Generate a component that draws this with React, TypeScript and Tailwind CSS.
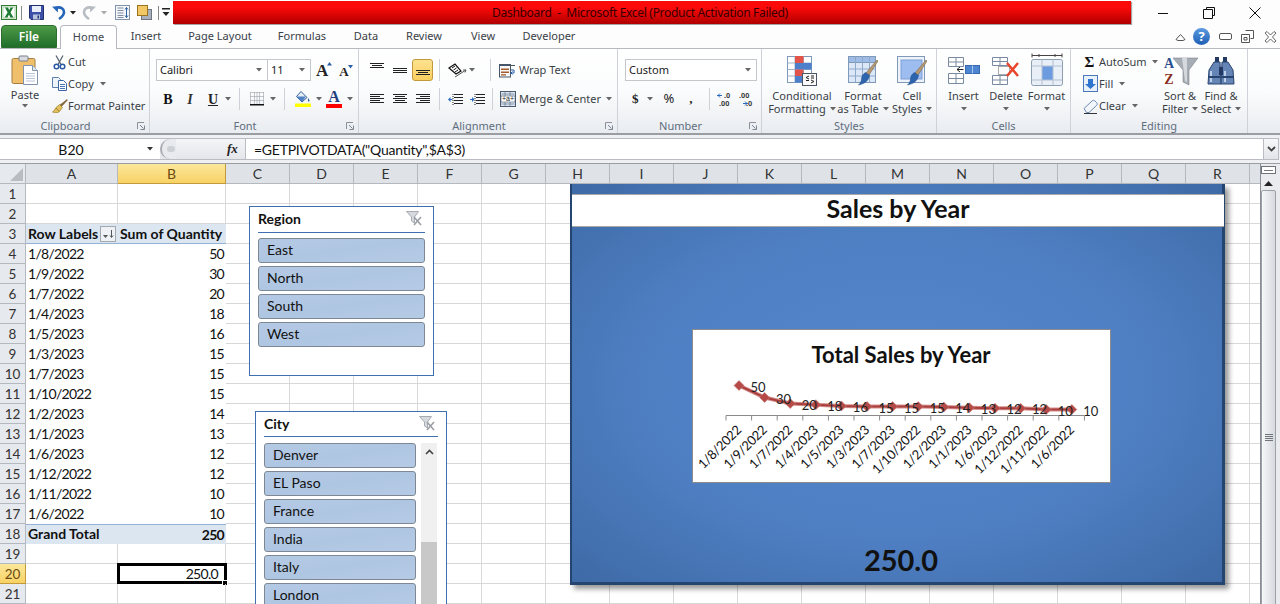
import React from "react";

const Caret = ({ c = "#666" }: { c?: string }) => (
  <svg width="6" height="4" viewBox="0 0 6 4" className="shrink-0"><path d="M0 0h6L3 3.5z" fill={c} /></svg>
);

const Lines = ({ w = 14, rows, }: { w?: number; rows: [number, number][] }) => (
  <svg width={w} height="12" viewBox={`0 0 ${w} 12`} className="shrink-0">
    {rows.map(([x, l], i) => <rect key={i} x={x} y={i * 2 + (12 - rows.length * 2) / 2} width={l} height="1" fill="#222" />)}
  </svg>
);

const ExcelLogo = () => (
  <svg width="16" height="15" viewBox="0 0 16 15" className="shrink-0">
    <rect x=".5" y=".5" width="15" height="14" fill="#eaf5e6" stroke="#2f7d32" />
    <rect x="2" y="2" width="12" height="11" fill="#fff" stroke="#7cb67a" strokeWidth=".6" />
    <path d="M4 2.5h3l1.2 2.6L9.6 2.500h2.600L9.500 7.400l3 5.100H9.400L8 9.600l-1.500 2.900H3.600l3-5.100z" fill="#1e7b34" />
  </svg>
);
const Floppy = () => (
  <svg width="15" height="15" viewBox="0 0 15 15" className="shrink-0">
    <path d="M.5.5h14v14H2L.5 13z" fill="#3c50a8" stroke="#20306e" />
    <rect x="3" y="1" width="9" height="6" fill="#e9eef8" />
    <rect x="4" y="9.500" width="7" height="5" fill="#b8c3dc" />
    <rect x="8.500" y="10.500" width="1.500" height="3" fill="#20306e" />
  </svg>
);
const Undo = ({ c, d }: { c: string; d: string }) => (
  <svg width="14" height="15" viewBox="0 0 14 15" className="shrink-0">
    <path d={d} fill="none" stroke={c} strokeWidth="2.600" />
    <path d="M0 1.500l6 .2-.2 5.800z" fill={c} />
  </svg>
);
const DocIcon = () => (
  <svg width="15" height="15" viewBox="0 0 15 15" className="shrink-0">
    <rect x=".5" y=".5" width="14" height="14" fill="#f4f6f9" stroke="#8193a8" />
    <path d="M2.500 3h6M2.500 5.500h6M2.500 8h6M2.500 10.500h6M2.500 12.500h6" stroke="#7c8da3" />
    <path d="M11.500 2.500v10M10 4.500l1.500-2 1.500 2M10 10.500l1.500 2 1.500-2" stroke="#2d64a8" fill="none" />
  </svg>
);
const Shapes = () => (
  <svg width="15" height="15" viewBox="0 0 15 15" className="shrink-0">
    <rect x="4.500" y="4.500" width="10" height="10" fill="#a9b0bb" stroke="#6e7682" />
    <rect x=".5" y=".5" width="10" height="10" fill="#f2c866" stroke="#9a7420" />
  </svg>
);
const Customize = () => (
  <svg width="8" height="9" viewBox="0 0 8 9" className="shrink-0"><rect y="0" width="8" height="1.500" fill="#222" /><path d="M.5 4h7L4 8z" fill="#222" /></svg>
);

const WinMin = () => <svg width="12" height="12" viewBox="0 0 12 12"><path d="M1 6.500h10" stroke="#111" /></svg>;
const WinRestore = () => <svg width="12" height="12" viewBox="0 0 12 12"><path d="M3.500 2.500V.5h8v8h-2M.5 2.500h9v9h-9z" stroke="#111" fill="none" /></svg>;
const WinClose = () => <svg width="12" height="12" viewBox="0 0 12 12"><path d="M.5.5l11 11M11.500.5l-11 11" stroke="#111" /></svg>;

const Launcher = () => (
  <svg width="8" height="8" viewBox="0 0 8 8" className="shrink-0"><path d="M.5 7V.5H7" stroke="#8a929c" fill="none" /><path d="M3 3l3.500 3.500M7.500 3.500v4h-4" stroke="#7d8590" fill="none" /></svg>
);

const PasteIcon = () => (
  <svg width="28" height="30" viewBox="0 0 28 30">
    <rect x="1" y="3.500" width="23" height="25" rx="1.500" fill="#f0bf6c" stroke="#a67f3f" />
    <rect x="8" y="1" width="9" height="5" rx="1" fill="#d8dbe0" stroke="#7a7f88" />
    <path d="M12.500 10.500h9l5 5v14h-14z" fill="#fff" stroke="#7f93ad" />
    <path d="M21.500 10.500v5h5" fill="#dfe7f2" stroke="#7f93ad" />
    <path d="M15 18.500h9M15 21h9M15 23.500h9M15 26h9" stroke="#b9c5d6" />
  </svg>
);
const CutIcon = () => (
  <svg width="13" height="15" viewBox="0 0 13 15">
    <path d="M3 .5l5 9M10 .5l-5 9" stroke="#5a6472" strokeWidth="1.300" />
    <circle cx="3.500" cy="11.500" r="2.300" fill="none" stroke="#2b58a3" strokeWidth="1.500" />
    <circle cx="9.500" cy="11.500" r="2.300" fill="none" stroke="#2b58a3" strokeWidth="1.500" />
  </svg>
);
const CopyIcon = () => (
  <svg width="15" height="14" viewBox="0 0 15 14">
    <path d="M.5.5h6l2 2v8h-8z" fill="#eef3fa" stroke="#5d7fae" />
    <path d="M6.500 3.500h5l3 3v7h-8z" fill="#fff" stroke="#3c66a3" />
    <path d="M8 7.500h5M8 9.500h5M8 11.500h5" stroke="#4a78b8" />
  </svg>
);
const PainterIcon = () => (
  <svg width="16" height="14" viewBox="0 0 16 14">
    <path d="M15 .5l.5.5-6 6.500-1.500-1.500z" fill="#8a6a3a" stroke="#5d4622" strokeWidth=".5" />
    <path d="M7.500 5.500l3 3-3.500 4.500c-2 1-4.500.5-6.500 0 2-1 2.500-3 3-4z" fill="#e5c15c" stroke="#9a7b27" strokeWidth=".7" />
    <path d="M4 9l3 3" stroke="#9c8136" />
  </svg>
);

const GrowA = ({ up, size }: { up: boolean; size: number }) => (
  <span className="flex items-start shrink-0">
    <span className="font-['Liberation_Serif',serif] font-bold leading-none text-[#222]" style={{ fontSize: size }}>A</span>
    <svg width="5" height="4" viewBox="0 0 5 4" className="-ml-[1px]"><path d={up ? "M0 3.500h5L2.500 0z" : "M0 0h5L2.500 3.500z"} fill="#2b5ea5" /></svg>
  </span>
);

const BordersIcon = () => (
  <svg width="14" height="14" viewBox="0 0 14 14">
    <path d="M.5.500h13M.5 4.500h13M.5 8.500h13M.5.500v12M4.500.5v12M9.500.5v12M13.500.5v12M7 .5v12" stroke="#8c929b" strokeDasharray="1 1" fill="none" />
    <rect x="0" y="12" width="14" height="1.500" fill="#111" />
  </svg>
);
const FillIcon = () => (
  <svg width="16" height="16" viewBox="0 0 16 16">
    <path d="M6 .5l6 6-5 4.500-5.500-5.500z" fill="#e8eef6" stroke="#345d95" />
    <path d="M1.500 5.500h9.500L7 11z" fill="#4f81c4" />
    <path d="M13 7c1.500 2 2 3 1.200 3.600-.9.500-1.700-.5-1.200-3.600z" fill="#345d95" />
    <rect x="0" y="12.500" width="16" height="3.500" fill="#ffff00" />
  </svg>
);
const ColorIcon = () => (
  <span className="relative flex flex-col items-center w-[16px] shrink-0">
    <span className="font-['Liberation_Serif',serif] font-bold text-[16px] leading-[13px] text-[#1f3f80]">A</span>
    <span className="w-[16px] h-[4px] mt-[1px] bg-[#ff0000]" />
  </span>
);

const OrientIcon = () => (
  <svg width="19" height="15" viewBox="0 0 19 15">
    <path d="M1 5l6-4 6 7-5 3z" fill="#fff" stroke="#111" strokeWidth="1.200" />
    <path d="M4 5l3-2M5.500 7l3-2M7 9l3-2" stroke="#111" />
    <path d="M7 14l11-7M18 7l-3 0M18 7l-1 2.500" stroke="#555" fill="none" />
  </svg>
);
const IndentIcon = ({ flip }: { flip?: boolean }) => (
  <svg width="15" height="13" viewBox="0 0 15 13">
    <path d="M6 1.500h9M6 4.500h9M6 7.500h9M6 10.500h9" stroke="#222" />
    <path d="M5 1v12" stroke="#222" strokeDasharray="1 1" />
    {flip ? <path d="M0 6h2V4l2.500 2.500L2 9V7H0z" fill="#2a6ac0" /> : <path d="M4.500 6h-2V4L0 6.500 2.500 9V7h2z" fill="#2a6ac0" />}
  </svg>
);
const WrapIcon = () => (
  <svg width="16" height="16" viewBox="0 0 16 16">
    <rect x=".5" y="2.500" width="11" height="12.500" fill="#f8f8f8" stroke="#46566a" />
    <path d="M0 .5h16" stroke="#46566a" strokeWidth="1" transform="translate(0 3)" />
    <rect x="2" y="6.500" width="8" height="1.500" fill="#a35c2f" />
    <rect x="2" y="9.500" width="8" height="1.500" fill="#a35c2f" />
    <rect x="2" y="12.200" width="5" height="1.300" fill="#a35c2f" />
    <path d="M12 8h3v3h-2M13.500 9.500l-1.500 1.500 1.500 1.500" stroke="#2a5ea8" fill="none" />
  </svg>
);
const MergeIcon = () => (
  <svg width="16" height="16" viewBox="0 0 16 16">
    <rect x=".5" y=".5" width="15" height="15" fill="#dfe7f1" stroke="#4c5c70" />
    <rect x="1" y="5" width="14" height="6" fill="#fff" stroke="#4c5c70" strokeWidth=".6" />
    <path d="M1.500 3h13M1.500 13h13M5 1v4M10 1v4M5 11v4M10 11v4" stroke="#6f8199" strokeWidth=".8" />
    <text x="8" y="10" fontSize="7" textAnchor="middle" fontFamily="'Liberation Sans',sans-serif" fill="#222">+a+</text>
  </svg>
);
const DecIcon = ({ more }: { more?: boolean }) => (
  <svg width="17" height="15" viewBox="0 0 17 15">
    <path d={more ? "M0 3.500h5M3 1.500l-2 2 2 2" : "M11 11.500H6M8 9.500l2 2-2 2"} stroke="#2a6ac0" fill="none" />
    <text x={more ? 7 : 2} y="6" fontSize="7.500" fontWeight="700" fontFamily="'Liberation Sans',sans-serif" fill="#333">{more ? ".0" : ".00"}</text>
    <text x={more ? 2 : 9} y="14" fontSize="7.500" fontWeight="700" fontFamily="'Liberation Sans',sans-serif" fill="#333">{more ? ".00" : ".0"}</text>
  </svg>
);

const GridBase = ({ children, w = 30, h = 30 }: { children?: React.ReactNode; w?: number; h?: number }) => (
  <svg width={w} height={h} viewBox={`0 0 ${w} ${h}`}>{children}</svg>
);
const CondIcon = () => (
  <GridBase>
    <rect x=".5" y=".5" width="24" height="26" fill="#fff" stroke="#7f9ab8" />
    <path d="M.5 7h24M.5 13.500h24M.5 20h24M8 .5v26M16.500.5v26" stroke="#9db3cc" />
    <rect x="8" y="0" width="8.500" height="7" fill="#e2534a" />
    <rect x="8" y="7" width="16.500" height="6.500" fill="#4d7fcb" />
    <rect x="8" y="13.500" width="8.500" height="6.500" fill="#e2534a" />
    <rect x="8" y="20" width="8.500" height="6.500" fill="#4d7fcb" />
    <rect x="15.500" y="17.500" width="14" height="12" fill="#fbfbfb" stroke="#4b5563" />
    <path d="M22 20l-3 1.500 3 1.500M19 24.500h3M24 20h3M24 22h3M24 24l3 1.500-3 1.500" stroke="#222" fill="none" />
  </GridBase>
);
const Brush = () => (
  <>
    <path d="M29 4l1 1-9 14-3-2z" fill="#b79a72" stroke="#7b674a" strokeWidth=".6" />
    <path d="M17.500 16.500l4 3c-1 5-4 8-11 9.500 2-2 3-4 3-6 0-3 2-5.500 4-6.500z" fill="#2e63ad" stroke="#1f4a87" strokeWidth=".5" />
  </>
);
const TableIcon = () => (
  <GridBase>
    <rect x=".5" y=".5" width="27" height="26" fill="#dce8f7" stroke="#7f9ab8" />
    <rect x=".5" y=".5" width="27" height="6" fill="#9dbbe4" stroke="#7f9ab8" />
    <path d="M.5 13h27M.5 20h27M7.500.5v26M14.500.5v26M21.500.5v26" stroke="#8fa9c9" />
    <Brush />
  </GridBase>
);
const StylesIcon = () => (
  <GridBase>
    <rect x=".5" y=".5" width="27" height="26" fill="#eef3fa" stroke="#7f9ab8" />
    <rect x="4" y="4" width="21" height="19" fill="#9dbcf0" stroke="#7ea0d6" />
    <Brush />
  </GridBase>
);
const InsertIcon = () => (
  <svg width="32" height="30" viewBox="0 0 32 30">
    <path d="M.5 1.500h15v9h-15zM.5 6h15M8 1.500v9M.5 17.500h15v10h-15zM.5 22.500h15M8 17.500v10" stroke="#7a8aa0" fill="#fff" />
    <rect x="17.500" y="9.500" width="14" height="8" fill="#4d85d1" stroke="#376ab3" />
    <path d="M24.500 9.500v8" stroke="#a9c6ee" />
    <path d="M15.500 13.500H9M12 11l-3 2.500 3 2.500" stroke="#222" fill="none" />
  </svg>
);
const DeleteIcon = () => (
  <svg width="28" height="30" viewBox="0 0 28 30">
    <path d="M.5 1.500h15v8h-15zM.5 5.500h15M8 1.500v8M.5 19.500h15v9h-15zM.5 24h15M8 19.500v9" stroke="#7a8aa0" fill="#fff" />
    <rect x="6.500" y="10.500" width="11" height="8" fill="#fff" stroke="#555" strokeDasharray="1 1" />
    <path d="M15 7l11 13M26 7L15 20" stroke="#e8452c" strokeWidth="2.500" />
  </svg>
);
const FormatIcon = () => (
  <svg width="32" height="34" viewBox="0 0 32 34" className="-mt-[3px]">
    <path d="M1 2.500h30M1 .5v4M31 .5v4M8 1v3M24 1v3" stroke="#444" fill="none" />
    <rect x=".5" y="6.500" width="31" height="26" rx="2" fill="#e9eff7" stroke="#8c9db3" />
    <rect x="11" y="13" width="11" height="14" fill="#6c9be0" />
    <path d="M.5 13h31M.5 27h31M11 6.500v26M22 6.500v26" stroke="#b1c0d2" />
  </svg>
);
const FillDown = () => (
  <svg width="15" height="18" viewBox="0 0 15 18">
    <rect x=".5" y=".5" width="14" height="16" fill="#e8f0fb" stroke="#4a78b8" />
    <path d="M5 4h5v5h3l-5.500 5L2 9h3z" fill="#2f74cf" />
  </svg>
);
const Eraser = () => (
  <svg width="15" height="15" viewBox="0 0 15 15">
    <path d="M1 9.500L9 2c1-1 2-1 3 0l1.500 1.500c1 1 1 2 0 3L6 13.500H3.500z" fill="#f2f5fa" stroke="#6b8ab5" />
    <path d="M1 14.500h13" stroke="#333" />
  </svg>
);
const SortIcon = () => (
  <svg width="36" height="32" viewBox="0 0 36 32">
    <path d="M11 3h25l-9 12v15l-6-3V15z" fill="#a7adb5" stroke="#7f858d" strokeWidth=".6" />
    <path d="M20 3h5v24l-2-1z" fill="#d5d8dc" />
    <text x="7" y="13" fontSize="14" fontWeight="700" fontFamily="'Liberation Serif',serif" textAnchor="middle" fill="#2b4f8f">A</text>
    <text x="7" y="29" fontSize="14" fontWeight="700" fontFamily="'Liberation Serif',serif" textAnchor="middle" fill="#8a2f20">Z</text>
  </svg>
);
const FindIcon = () => (
  <svg width="30" height="30" viewBox="0 0 30 30">
    <rect x="9" y="1" width="4" height="6" fill="#223a63" />
    <rect x="17" y="1" width="4" height="6" fill="#223a63" />
    <path d="M8 6h6l1 22H2l1-14z" fill="#6485b5" stroke="#2a4470" />
    <path d="M16 6h6l5 8 1 14H15z" fill="#6485b5" stroke="#2a4470" />
    <rect x="13" y="11" width="4" height="8" fill="#223a63" />
    <path d="M5 15v11M19 15v11" stroke="#bcd0ea" strokeWidth="2" />
    <rect x="2.500" y="20" width="12" height="2" fill="#2a4470" />
    <rect x="15.500" y="20" width="12" height="2" fill="#2a4470" />
  </svg>
);

const Group = ({ w, label, launcher, children }: { w: string; label: string; launcher?: boolean; children: React.ReactNode }) => (
  <div className={`${w} h-full flex flex-col shrink-0 border-r border-[#cfd3d9]`}>
    <div className="h-[69px] flex">{children}</div>
    <div className="flex-1 flex items-start relative">
      <div className={`flex-1 text-center text-[#5f6d7e] leading-[14px] pt-[1px] ${launcher ? "pr-[18px]" : ""}`}>{label}</div>
      {launcher && <span className="absolute right-[4px] top-[4px]"><Launcher /></span>}
    </div>
  </div>
);

const Big = ({ w, icon, l1, l2, caret }: { w: string; icon: React.ReactNode; l1: string; l2?: string; caret?: boolean }) => (
  <div className={`${w} flex flex-col items-center shrink-0 pt-[7px]`}>
    <div className="h-[30px] flex items-center justify-center">{icon}</div>
    <div className="mt-[3px] leading-[13px] whitespace-nowrap">{l1}</div>
    {l2 && (
      <div className="leading-[13px] whitespace-nowrap flex items-center gap-[4px]">
        {l2}{caret && <Caret />}
      </div>
    )}
    {!l2 && caret && <div className="h-[13px] flex items-center"><Caret /></div>}
  </div>
);

const SmallRow = ({ icon, text, caret, iw = "w-[20px]" }: { icon: React.ReactNode; text: string; caret?: boolean; iw?: string }) => (
  <div className="h-[22px] flex items-center whitespace-nowrap">
    <span className={`${iw} flex justify-center shrink-0`}>{icon}</span>
    <span className="ml-[-1px]">{text}</span>
    {caret && <span className="ml-[6px]"><Caret /></span>}
  </div>
);

const Sep = ({ h = "h-[22px]", m = "" }: { h?: string; m?: string }) => <span className={`${h} ${m} w-px bg-[#cdd2d8] shrink-0`} />;

const ColNames = "ABCDEFGHIJKLMNOPQR".split("");
const colW = (i: number) => (i === 0 ? "w-[92px]" : i === 1 ? "w-[108px]" : "w-[64px]");

const Pivot: [string, string][] = [
  ["1/8/2022", "50"], ["1/9/2022", "30"], ["1/7/2022", "20"], ["1/4/2023", "18"], ["1/5/2023", "16"],
  ["1/3/2023", "15"], ["1/7/2023", "15"], ["1/10/2022", "15"], ["1/2/2023", "14"], ["1/1/2023", "13"],
  ["1/6/2023", "12"], ["1/12/2022", "12"], ["1/11/2022", "10"], ["1/6/2022", "10"],
];

const rowCell = "h-[20px] shrink-0 px-[2px] leading-[20px] whitespace-nowrap text-[#111]";
const num = "tracking-[-0.7px]";

const Row = ({ n }: { n: number }) => {
  const inPivot = n >= 3 && n <= 18;
  const sel = n === 20;
  const band = n === 3 || n === 18;
  const p = n >= 4 && n <= 17 ? Pivot[n - 4] : null;
  return (
    <div className="flex h-[20px]">
      <div className={`w-[26px] h-[20px] shrink-0 text-center leading-[20px] text-[13.5px] border-r border-b ${sel ? "bg-gradient-to-b from-[#fbe79a] to-[#f8d264] border-[#c29a3b] text-[#6b4a10]" : "bg-[#e6e9ed] border-[#b4b9bf] text-[#333]"}`}>{n}</div>
      <div className={`w-[92px] ${rowCell} ${band ? "bg-[#dce6f1]" : ""} ${inPivot ? "" : "border-r border-b border-[#d8d8d8]"} ${n === 3 ? "border-b border-[#95b3d7]" : ""} ${n === 18 ? "font-bold border-t border-[#95b3d7]" : ""} flex items-center justify-between pr-0`}>
        {n === 3 && <><b>Row Labels</b>
          <span className="w-[16px] h-[16px] border border-[#a3a8ae] bg-[#eef1f5] flex items-center justify-center mr-[2px]">
            <svg width="12" height="10" viewBox="0 0 12 10"><path d="M1 6h5L3.500 9z" fill="#555" /><path d="M9.500 1v7M8 6.500l1.500 2 1.500-2" stroke="#555" fill="none" /></svg>
          </span></>}
        {p && <span className={num}>{p[0]}</span>}
        {n === 18 && <span className="-mt-[2px]">Grand Total</span>}
      </div>
      <div className={`w-[108px] ${rowCell} relative text-right ${band ? "bg-[#dce6f1]" : ""} ${inPivot ? "" : "border-r border-b border-[#d8d8d8]"} ${n === 3 ? "border-b border-[#95b3d7]" : ""} ${n === 18 ? "font-bold border-t border-[#95b3d7] leading-[17px]" : ""}`}>
        {n === 3 && <b className="block text-left">Sum of Quantity</b>}
        {p && <span className={num}>{p[1]}</span>}
        {n === 18 && <span className={num}>250</span>}
        {sel && <>
          <span className={`pr-[5px] ${num}`}>250.0</span>
          <span className="absolute -left-[1px] -top-[1px] -right-[2px] -bottom-[1px] border-[3px] border-black" />
          <span className="absolute -right-[3px] -bottom-[3px] w-[4px] h-[4px] bg-black border border-white box-content" />
        </>}
      </div>
      {ColNames.slice(2).map((c) => <div key={c} className="w-[64px] h-[20px] shrink-0 border-r border-b border-[#d8d8d8]" />)}
      <div className="w-[10px] h-[20px] shrink-0 border-b border-[#d8d8d8]" />
    </div>
  );
};

const ClearFilter = () => (
  <svg width="16" height="15" viewBox="0 0 16 15">
    <path d="M.5.5h12L8.500 6v6l-3-2V6z" fill="#d6d9dd" stroke="#a8acb2" />
    <path d="M8 6l7 8M15 6l-7 8" stroke="#9a9ea5" strokeWidth="1.600" />
  </svg>
);

const SlicerBtn = ({ t, w }: { t: string; w: string }) => (
  <div className={`${w} h-[25px] shrink-0 rounded-[3px] border border-[#7d8894] bg-gradient-to-br from-[#b4c9e4] via-[#afc6e2] to-[#b5cae5] pl-[8px] leading-[22px] text-[#111] text-[14px]`}>{t}</div>
);

const data: [string, number][] = Pivot.map(([d, v]) => [d, Number(v)]);
const X0 = 33;
const step = 25.6;
const px = (i: number) => X0 + 13 + step * i;
const py = (v: number) => 85.5 - 0.6 * v;
const Chart = () => {
  const pts = data.map(([, v], i) => `${px(i)},${py(v)}`).join(" ");
  return (
    <svg width="418" height="153" viewBox="0 0 418 153" className="block">
      <text x="208" y="33" textAnchor="middle" fontSize="22" fontWeight="700" fontFamily="Lato,sans-serif" fill="#111">Total Sales by Year</text>
      <path d={`M${X0} 85.500H${X0 + 358}`} stroke="#8a8a8a" />
      {Array.from({ length: 15 }, (_, i) => <path key={i} d={`M${X0 + step * i} 85.500v5`} stroke="#8a8a8a" />)}
      <polyline points={pts} fill="none" stroke="#d58f8d" strokeWidth="4" />
      <polyline points={pts} fill="none" stroke="#a93f3c" strokeWidth="2" />
      {data.map(([, v], i) => (
        <path key={i} d={`M${px(i)} ${py(v) - 5}l5 5-5 5-5-5z`} fill="#b54a47" stroke="#c9817f" strokeWidth=".6" />
      ))}
      {data.map(([, v], i) => (
        <text key={i} x={px(i) + 19} y={py(v) + 6} textAnchor="middle" fontSize="13" fontFamily="Lato,sans-serif" fill="#222">{v}</text>
      ))}
      {data.map(([d], i) => (
        <text key={i} x={0} y={0} transform={`translate(${px(i) + 3} ${101}) rotate(-45)`} textAnchor="end" fontSize="13" letterSpacing="-0.3" fontFamily="Lato,sans-serif" fill="#111">{d}</text>
      ))}
    </svg>
  );
};

export default function App() {
  return (
    <div className="relative w-[1280px] h-[604px] overflow-hidden bg-white font-['Noto_Sans',sans-serif] text-[11px] text-[#3a3f46]">
      {/* title bar */}
      <div className="h-[25px] flex items-start bg-[#fdfdfe]">
        <div className="w-[173px] h-[25px] shrink-0 flex items-center pl-[1px]">
          <ExcelLogo />
          <span className="ml-[4px] w-px h-[14px] bg-[#888]" />
          <span className="ml-[7px]"><Floppy /></span>
          <span className="ml-[8px]"><Undo c="#2463b8" d="M3 3c6-2 9 1 9 4s-2 5-5 7" /></span>
          <span className="ml-[4px]"><Caret c="#222" /></span>
          <span className="ml-[6px] -scale-x-100"><Undo c="#b7bcc3" d="M3 3c6-2 9 1 9 4s-2 5-5 7" /></span>
          <span className="ml-[5px]"><Caret c="#aaa" /></span>
          <span className="ml-[8px]"><DocIcon /></span>
          <span className="ml-[7px]"><Shapes /></span>
          <span className="ml-[6px] w-px h-[14px] bg-[#888]" />
          <span className="ml-[3px]"><Customize /></span>
        </div>
        <div className="w-[958px] h-[23px] mt-[1px] shrink-0 bg-gradient-to-b from-[#fb0a0a] from-30% to-[#b00000] shadow-[1px_1px_1px_rgba(0,0,0,0.35)] flex items-center justify-center pr-[24px] text-[12px] text-[#350000] tracking-[-0.3px] whitespace-pre">
          Dashboard  -  Microsoft Excel (Product Activation Failed)
        </div>
        <div className="flex-1 h-[25px] flex items-center pl-[26px] gap-[34px]">
          <WinMin /><WinRestore /><WinClose />
        </div>
      </div>

      {/* tabs */}
      <div className="h-[24px] flex items-end border-b border-[#b5b9be] bg-[#fdfdfe] relative">
        <div className="w-[56px] ml-[1px] h-[23px] rounded-t-[4px] bg-gradient-to-b from-[#4d9a47] to-[#1f6e2a] border border-[#2b6d2e] text-white text-[12px] font-semibold flex items-center justify-center">File</div>
        <div className="w-[57px] ml-[3px] h-[24px] -mb-px rounded-t-[4px] bg-white border border-b-0 border-[#b5b9be] flex items-center justify-center text-[#3d4650]">Home</div>
        {([["w-[58px]", "Insert"], ["w-[90px]", "Page Layout"], ["w-[74px]", "Formulas"], ["w-[54px]", "Data"], ["w-[62px]", "Review"], ["w-[56px]", "View"], ["w-[76px]", "Developer"]] as [string, string][]).map(([w, t]) => (
          <div key={t} className={`${w} h-[23px] flex items-center justify-center`}>{t}</div>
        ))}
        <div className="ml-auto h-[23px] flex items-center pr-[3px] gap-[7px]">
          <svg width="11" height="8" viewBox="0 0 11 8"><path d="M1 6.500L5.500 1.500 10 6.500 8 7.500H3z" fill="#fff" stroke="#555" /></svg>
          <span className="w-[17px] h-[17px] rounded-full bg-gradient-to-b from-[#5b9be0] to-[#1d5fb4] text-white font-bold text-[13px] flex items-center justify-center leading-none">?</span>
          <svg width="13" height="7" viewBox="0 0 13 7" className="ml-[2px]"><rect x=".5" y=".5" width="12" height="6" rx="1.500" fill="#fff" stroke="#555" /></svg>
          <svg width="13" height="13" viewBox="0 0 13 13" className="ml-[2px]"><path d="M4.500.5h8v8h-3M.5 4.500h8v8h-8z M3 7.500h3v2.500H3z" fill="#fff" stroke="#555" /></svg>
          <svg width="13" height="12" viewBox="0 0 13 12" className="ml-[3px]"><path d="M1 2l2-1.500 3.500 3.500L10 .5 12 2 8.500 6 12 10l-2 1.500L6.500 8 3 11.500 1 10l3.500-4z" fill="#fff" stroke="#666" /></svg>
        </div>
      </div>

      {/* ribbon */}
      <div className="h-[86px] flex bg-gradient-to-b from-[#ffffff] via-[#fbfcfd] to-[#e9ecf0] border-b-2 border-[#9a9da2]">
        <Group w="w-[150px]" label="Clipboard" launcher>
          <div className="w-[50px] flex flex-col items-center pt-[6px]">
            <PasteIcon />
            <div className="mt-[3px] leading-[13px]">Paste</div>
            <div className="mt-[3px]"><Caret /></div>
          </div>
          <div className="pt-[2px] flex flex-col">
            <SmallRow icon={<CutIcon />} text="Cut" iw="w-[19px]" />
            <SmallRow icon={<CopyIcon />} text="Copy" caret iw="w-[19px]" />
            <SmallRow icon={<PainterIcon />} text="Format Painter" iw="w-[19px]" />
          </div>
        </Group>

        <Group w="w-[209px]" label="Font" launcher>
          <div className="pl-[6px] pt-[10px] flex flex-col w-full">
            <div className="flex items-center h-[22px]">
              <div className="w-[112px] h-[22px] border border-[#c4c8cd] bg-white flex items-center pl-[3px] pr-[5px] justify-between text-[#222]">Calibri<Caret /></div>
              <div className="w-[43px] h-[22px] border border-l-0 border-[#c4c8cd] bg-white flex items-center pl-[3px] pr-[5px] justify-between text-[#222]">11<Caret /></div>
              <span className="ml-[5px]"><GrowA up size={17} /></span>
              <span className="ml-[7px] mt-[2px]"><GrowA up={false} size={13} /></span>
            </div>
            <div className="flex items-center h-[22px] mt-[7px] pl-[6px]">
              <b className="w-[12px] text-center font-['Liberation_Serif',serif] text-[14px] text-[#111]">B</b>
              <i className="ml-[11px] w-[10px] text-center font-['Liberation_Serif',serif] font-bold text-[14px] text-[#333]">I</i>
              <u className="ml-[12px] w-[12px] text-center font-['Liberation_Serif',serif] font-bold text-[14px] text-[#222]">U</u>
              <span className="ml-[6px]"><Caret /></span>
              <Sep m="ml-[8px]" />
              <span className="ml-[10px]"><BordersIcon /></span>
              <span className="ml-[6px]"><Caret /></span>
              <Sep m="ml-[8px]" />
              <span className="ml-[10px]"><FillIcon /></span>
              <span className="ml-[5px]"><Caret /></span>
              <span className="ml-[4px]"><ColorIcon /></span>
              <span className="ml-[5px]"><Caret /></span>
            </div>
          </div>
        </Group>

        <Group w="w-[259px]" label="Alignment" launcher>
          <div className="pl-[11px] pt-[10px] flex flex-col">
            <div className="flex items-center h-[22px]">
              <span className="w-[14px] -mt-[8px]"><Lines rows={[[0, 14], [2, 10], [0, 14]]} /></span>
              <span className="ml-[9px] mt-[2px]"><Lines rows={[[0, 14], [0, 14], [0, 14]]} /></span>
              <span className="ml-[5px] w-[21px] h-[22px] rounded-[3px] border border-[#c29a3b] bg-gradient-to-b from-[#fde28f] to-[#fbcf5f] flex items-end justify-center pb-[1px]"><Lines rows={[[0, 14], [2, 10], [0, 14]]} /></span>
              <Sep m="ml-[6px]" />
              <span className="ml-[8px] mt-[1px]"><OrientIcon /></span>
              <span className="ml-[2px]"><Caret /></span>
              <Sep m="ml-[15px]" />
              <span className="ml-[8px]"><WrapIcon /></span>
              <span className="ml-[4px] whitespace-nowrap">Wrap Text</span>
            </div>
            <div className="flex items-center h-[22px] mt-[7px]">
              <Lines rows={[[0, 14], [0, 10], [0, 14], [0, 10], [0, 14]]} />
              <span className="ml-[9px]"><Lines rows={[[0, 14], [2, 10], [0, 14], [2, 10], [0, 14]]} /></span>
              <span className="ml-[9px]"><Lines rows={[[0, 14], [4, 10], [0, 14], [4, 10], [0, 14]]} /></span>
              <Sep m="ml-[9px]" />
              <span className="ml-[8px]"><IndentIcon /></span>
              <span className="ml-[7px]"><IndentIcon flip /></span>
              <Sep m="ml-[7px]" />
              <span className="ml-[7px]"><MergeIcon /></span>
              <span className="ml-[3px] whitespace-nowrap">Merge &amp; Center</span>
              <span className="ml-[5px]"><Caret /></span>
            </div>
          </div>
        </Group>

        <Group w="w-[144px]" label="Number" launcher>
          <div className="pl-[7px] pt-[10px] flex flex-col">
            <div className="w-[132px] h-[22px] border border-[#c4c8cd] bg-white flex items-center pl-[3px] pr-[5px] justify-between text-[#222]">Custom<Caret /></div>
            <div className="flex items-center h-[22px] mt-[7px] text-[#222]">
              <b className="ml-[7px] text-[13px] font-['Liberation_Serif',serif]">$</b>
              <span className="ml-[8px]"><Caret /></span>
              <span className="ml-[11px] text-[13px]">%</span>
              <b className="ml-[15px] text-[13px] font-['Liberation_Serif',serif]">,</b>
              <Sep m="ml-[16px]" />
              <span className="ml-[7px]"><DecIcon more /></span>
              <span className="ml-[3px]"><DecIcon /></span>
            </div>
          </div>
        </Group>

        <Group w="w-[175px]" label="Styles">
          <Big w="w-[80px]" icon={<CondIcon />} l1="Conditional" l2="Formatting" caret />
          <Big w="w-[42px]" icon={<TableIcon />} l1="Format" l2="as Table" caret />
          <Big w="w-[56px]" icon={<StylesIcon />} l1="Cell" l2="Styles" caret />
        </Group>

        <Group w="w-[134px]" label="Cells">
          <Big w="w-[53px]" icon={<InsertIcon />} l1="Insert" caret />
          <Big w="w-[32px]" icon={<DeleteIcon />} l1="Delete" caret />
          <Big w="w-[49px]" icon={<FormatIcon />} l1="Format" caret />
        </Group>

        <Group w="w-[177px]" label="Editing">
          <div className="w-[89px] pt-[2px] pl-[9px] flex flex-col shrink-0">
            <div className="h-[22px] flex items-center whitespace-nowrap">
              <b className="w-[19px] text-center text-[15px] font-['Liberation_Serif',serif] text-[#111] leading-none">Σ</b>
              <span>AutoSum</span><span className="ml-[5px]"><Caret /></span>
            </div>
            <SmallRow icon={<FillDown />} text="Fill" caret />
            <SmallRow icon={<Eraser />} text="Clear" caret />
          </div>
          <Big w="w-[40px]" icon={<SortIcon />} l1="Sort &" l2="Filter" caret />
          <Big w="w-[42px]" icon={<FindIcon />} l1="Find &" l2="Select" caret />
        </Group>
      </div>

      {/* formula bar */}
      <div className="h-[28px] pt-[3px] flex items-start bg-[#eef0f3]">
        <div className="w-[160px] h-[22px] bg-white border-y border-[#b9bdc3] flex items-center text-[14px] text-[#111] font-['Lato',sans-serif] shrink-0">
          <span className="w-[147px] pr-[5px] text-center">B20</span><Caret c="#333" />
        </div>
        <div className="w-[85px] h-[22px] bg-gradient-to-b from-[#f4f5f7] to-[#e4e6ea] border-y border-[#b9bdc3] flex items-center shrink-0">
          <span className="w-[16px] h-[20px] rounded-l-full bg-[#e8eaed] border-l-2 border-[#a9adb3] flex items-center justify-end pr-[1px]">
            <span className="w-[8px] h-[6px] rounded-full bg-[#cdd0d5]" />
          </span>
          <i className="ml-[51px] font-['Liberation_Serif',serif] font-bold text-[13px] text-[#222]">fx</i>
        </div>
        <div className="flex-1 h-[22px] bg-white border-y border-l border-[#b9bdc3] pl-[8px] flex items-center text-[14px] tracking-[-0.25px] text-[#111] font-['Lato',sans-serif]">=GETPIVOTDATA("Quantity",$A$3)</div>
        <div className="w-[16px] h-[22px] bg-gradient-to-b from-[#f7f8fa] to-[#e2e4e8] border border-[#b9bdc3] flex items-center justify-center shrink-0 mr-[1px]">
          <svg width="9" height="6" viewBox="0 0 9 6"><path d="M1 1l3.500 3.500L8 1" stroke="#444" strokeWidth="1.800" fill="none" /></svg>
        </div>
      </div>

      {/* sheet */}
      <div className="relative flex font-['Lato',sans-serif] text-[14px] text-[#111] border-t border-[#9a9da2]">
        <div className="w-[1260px] shrink-0">
          <div className="flex h-[20px]">
            <div className="w-[26px] h-[20px] shrink-0 bg-[#e6e9ed] border-r border-b border-[#b4b9bf] flex items-end justify-end p-[2px]">
              <svg width="13" height="13" viewBox="0 0 13 13"><path d="M13 0v13H0z" fill="#b9bdc2" /></svg>
            </div>
            {ColNames.map((c, i) => (
              <div key={c} className={`${colW(i)} h-[20px] shrink-0 text-center leading-[19px] border-r border-b ${i === 1 ? "bg-gradient-to-b from-[#fbe79a] to-[#f8d264] border-[#c29a3b] text-[#6b4a10]" : "bg-[#dfe3e8] border-[#b4b9bf] text-[#333]"}`}>{c}</div>
            ))}
            <div className="w-[10px] h-[20px] bg-[#dfe3e8] border-b border-[#b4b9bf] shrink-0" />
          </div>
          {Array.from({ length: 21 }, (_, i) => <Row key={i} n={i + 1} />)}
        </div>

        {/* vertical scrollbar */}
        <div className="flex-1 h-[441px] border-l border-[#8a8f97] bg-[#e9ebee] flex flex-col items-center pt-[2px] pr-[4px]">
          <div className="w-[15px] h-[8px] border border-[#6f747b] bg-white flex items-center justify-center"><span className="w-[9px] h-px bg-[#777]" /></div>
          <div className="mt-[2px] h-[14px] flex items-center justify-center"><svg width="9" height="5" viewBox="0 0 9 5"><path d="M0 5h9L4.500 0z" fill="#222" /></svg></div>
          <div className="w-[15px] flex-1 border border-[#9ca1a8] rounded-t-[2px] bg-gradient-to-r from-[#f6f7f9] to-[#d6d9de] relative">
            <div className="absolute left-[3px] top-[243px] w-[8px] flex flex-col gap-px">
              <span className="h-px bg-[#6f747b]" /><span className="h-px bg-[#6f747b]" /><span className="h-px bg-[#6f747b]" /><span className="h-px bg-[#6f747b]" />
            </div>
          </div>
        </div>

        {/* Region slicer */}
        <div className="absolute left-[249px] top-[42px] w-[185px] h-[170px] bg-white border border-[#3f6fae] px-[8px]">
          <div className="h-[26px] pb-[2px] flex items-center justify-between border-b border-[#3f6fae] pr-[3px]">
            <b className="text-[#111]">Region</b><ClearFilter />
          </div>
          <div className="mt-[5px] flex flex-col gap-[3px]">
            {["East", "North", "South", "West"].map((t) => <SlicerBtn key={t} t={t} w="w-full" />)}
          </div>
        </div>

        {/* City slicer */}
        <div className="absolute left-[255px] top-[247px] w-[192px] h-[220px] bg-white border border-[#3f6fae] px-[8px] overflow-hidden">
          <div className="h-[25px] pb-[2px] flex items-center justify-between border-b border-[#3f6fae] pr-[3px]">
            <b className="text-[#111]">City</b><ClearFilter />
          </div>
          <div className="mt-[6px] flex gap-[5px]">
            <div className="w-[152px] flex flex-col gap-[3px] shrink-0">
              {["Denver", "EL Paso", "France", "India", "Italy", "London"].map((t) => <SlicerBtn key={t} t={t} w="w-full" />)}
            </div>
            <div className="w-[16px] h-[165px] bg-[#f0f0f0] flex flex-col items-center shrink-0">
              <svg width="9" height="6" viewBox="0 0 9 6" className="mt-[6px]"><path d="M1 5l3.500-3.500L8 5" stroke="#444" strokeWidth="1.600" fill="none" /></svg>
              <div className="mt-auto w-full h-[66px] bg-[#c8c8c8]" />
            </div>
          </div>
        </div>

        {/* dashboard panel */}
        <div className="absolute left-[570px] top-[20px] w-[655px] h-[401px] border-l-2 border-r-[3px] border-b-[3px] border-t-0 border-[#23456f] bg-[radial-gradient(ellipse_at_center,#5585cb_0%,#4f7fc3_55%,#3e6aa6_100%)] shadow-[4px_4px_5px_rgba(0,0,0,0.4)] flex flex-col">
          <div className="mt-[10px] h-[33px] w-[652px] shrink-0 bg-white border-y border-[#a8a8a8] pb-[3px] flex items-center justify-center font-bold text-[25px] text-[#111]">Sales by Year</div>
          <div className="mt-[102px] ml-[120px] w-[419px] h-[154px] shrink-0 bg-white border border-[#8c8c8c]"><Chart /></div>
          <div className="mt-[59px] text-center font-bold text-[29px] leading-[36px] text-[#111] pl-[8px]">250.0</div>
        </div>
      </div>
    </div>
  );
}
